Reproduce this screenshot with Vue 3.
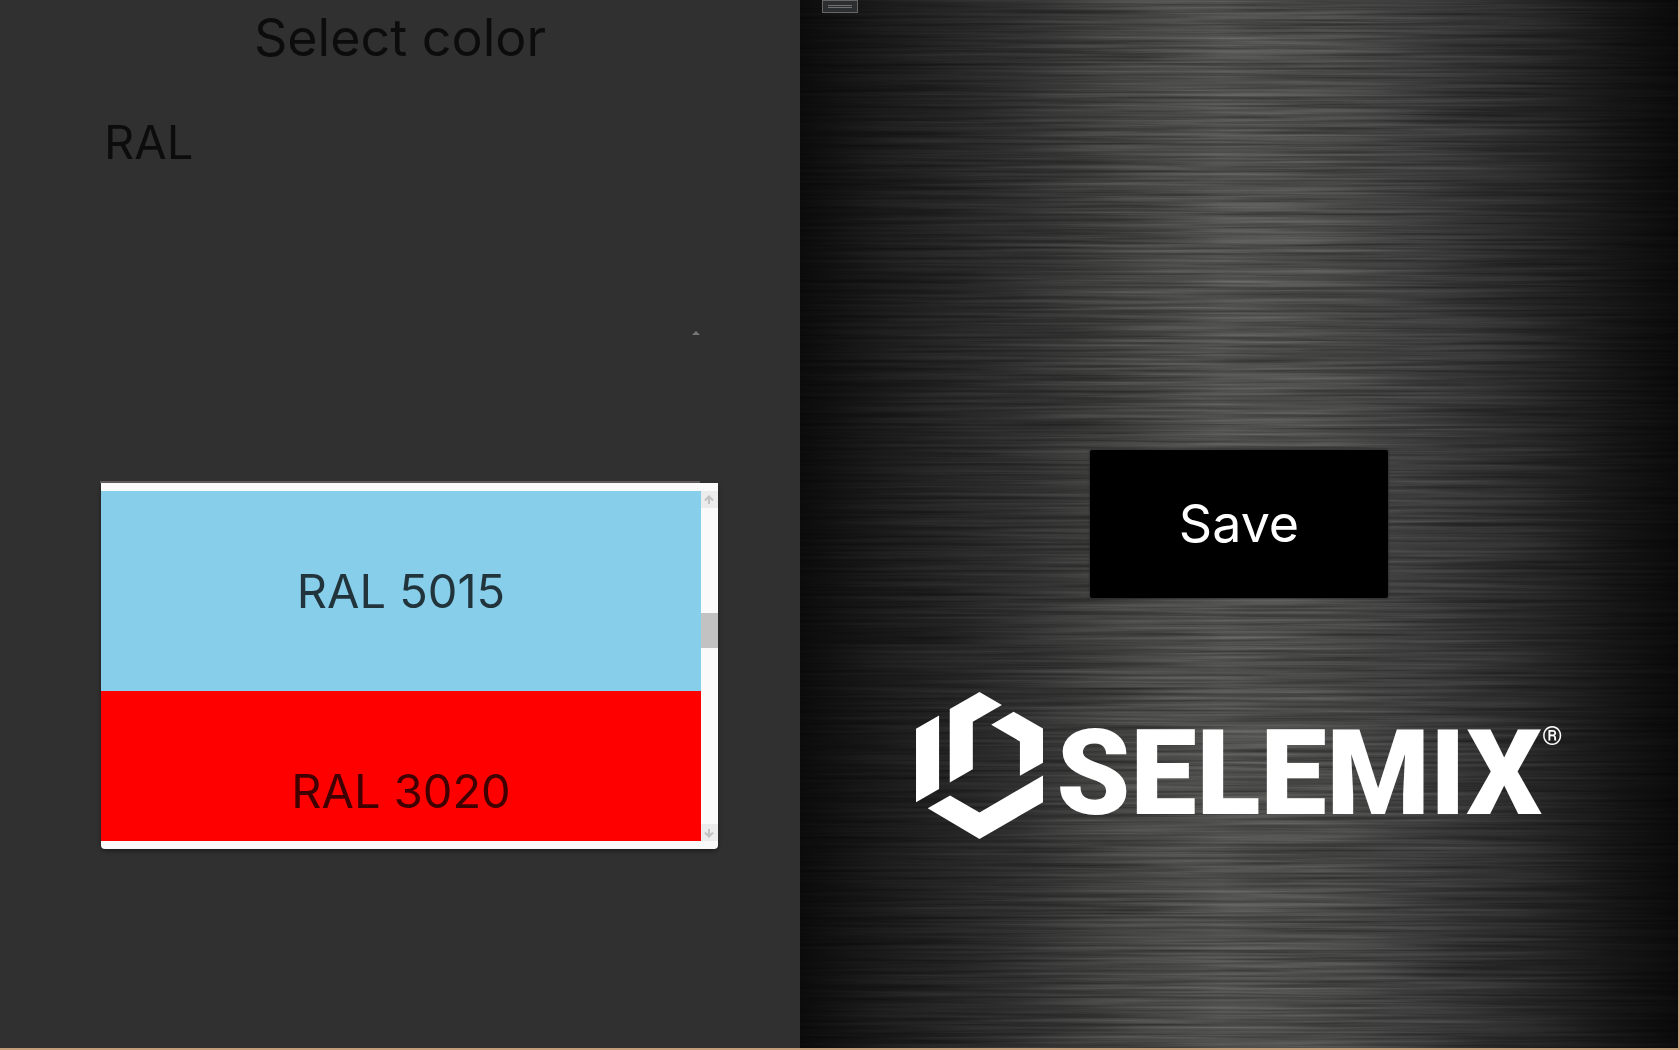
<script setup>
import { ref } from 'vue'

const colors = [
  { code: 'RAL 5015', fill: '#87ceeb' },
  { code: 'RAL 3020', fill: '#ff0000' }
]
const selected = ref('')
</script>

<template>
  <main class="page">
    <section class="picker">
      <h1 class="title">Select color</h1>
      <div class="field">
        <label class="label" for="ral">RAL</label>
        <div class="trigger">
          <select id="ral" v-model="selected" class="select">
            <option value=""></option>
            <option v-for="c in colors" :key="c.code" :value="c.code">{{ c.code }}</option>
          </select>
          <svg class="caret" viewBox="0 0 8 4" aria-hidden="true"><path d="M0 4 4 0 8 4Z" /></svg>
        </div>
        <div class="panel">
          <div class="options" role="listbox" aria-label="RAL">
            <button
              v-for="c in colors"
              :key="c.code"
              class="option"
              type="button"
              role="option"
              :aria-selected="selected === c.code"
              :style="{ backgroundColor: c.fill }"
              @click="selected = c.code"
            >{{ c.code }}</button>
          </div>
          <div class="scrollbar" aria-hidden="true">
            <svg class="arrow" viewBox="0 0 17 17"><path d="M8 13V6M4 9.500 8 5.500 12 9.500" /></svg>
            <div class="track"><div class="thumb"></div></div>
            <svg class="arrow" viewBox="0 0 17 17"><path d="M8 5v7M4 8.500 8 12.500 12 8.500" /></svg>
          </div>
        </div>
      </div>
    </section>

    <section class="preview">
      <svg class="metal" aria-hidden="true">
        <filter id="brushed" x="0" y="0" width="100%" height="100%" color-interpolation-filters="sRGB">
          <feTurbulence type="fractalNoise" baseFrequency="0.005 0.3" numOctaves="3" seed="8" />
          <feColorMatrix values="0.45 0 0 0 0.27  0.45 0 0 0 0.27  0.45 0 0 0 0.27  0 0 0 0 1" />
        </filter>
        <rect width="100%" height="100%" filter="url(#brushed)" />
      </svg>
      <button class="handle" type="button" aria-label="Toolbar"><span class="grip"></span></button>
      <div class="content">
        <button class="save" type="button">Save</button>
        <div class="logo">
          <svg class="mark" viewBox="50 65 380 440" aria-hidden="true">
            <path d="M50 175 119 135V355L50 395Z" />
            <path d="M151 116 240 65 307 104 220 154V296L151 336Z" />
            <path d="M275 163 342 124 430 174V277L361 316V213Z" />
            <path d="M85 413 152 375 240 426 430 315V395L240 505Z" />
          </svg>
          <span class="brand">SELEMIX</span>
          <span class="reg">®</span>
        </div>
      </div>
    </section>
  </main>
</template>

<style>
body {
  margin: 0;
}
</style>

<style scoped>
.page {
  display: flex;
  box-sizing: border-box;
  min-height: 100vh;
  border-right: 2px solid #c49d7b;
  border-bottom: 2px solid #c49d7b;
  background: #303030;
  color: rgba(0, 0, 0, 0.75);
  font-family: Inter, "Liberation Sans", sans-serif;
  font-size: 47px;
  line-height: 76px;
}

button {
  border: 0;
  font: inherit;
  cursor: pointer;
}

.picker {
  flex: 800 1 0;
  min-width: 0;
}

.title {
  margin: 0;
  font-size: 52px;
  font-weight: 400;
  line-height: 76px;
  text-align: center;
}

.field {
  width: 75%;
  margin: 28px auto 0;
}

.label {
  display: block;
  padding-left: 4px;
}

.trigger {
  display: flex;
  align-items: center;
  height: 297px;
  padding-top: 4px;
  border-bottom: 2px solid #625e62;
}

.select {
  flex: 1;
  min-width: 0;
  height: 76px;
  border: 0;
  outline: 0;
  appearance: none;
  background: transparent;
  color: inherit;
  font: inherit;
}

.caret {
  width: 8px;
  height: 4px;
  fill: #777;
}

.panel {
  display: flex;
  width: calc(100% + 17px);
  margin-left: 1px;
  padding: 8px 0;
  border-radius: 0 0 4px 4px;
  background: #fafafa;
  box-shadow: 0 2px 4px rgba(0, 0, 0, 0.4);
}

.options {
  flex: 1;
  height: 350px;
  overflow: hidden;
}

.option {
  display: block;
  width: 100%;
  height: 200px;
  padding: 0;
  color: inherit;
}

.scrollbar {
  display: flex;
  flex-direction: column;
  width: 17px;
}

.arrow {
  width: 17px;
  height: 17px;
  background: #ececec;
  fill: none;
  stroke: #c2c2c2;
  stroke-width: 2;
}

.track {
  flex: 1;
  padding-top: 105px;
}

.thumb {
  height: 35px;
  background: #c2c2c2;
}

.preview {
  position: relative;
  display: flex;
  flex: 878 1 0;
  flex-direction: column;
  min-width: 0;
  background: linear-gradient(90deg, #0b0b0b 0%, #1b1b1b 10%, #2f2f2f 25%, #434342 37%, #525250 48%, #4a4a49 59%, #3c3c3c 71%, #282828 83%, #151515 93%, #0a0a0a 100%);
}

.metal {
  position: absolute;
  inset: 0;
  width: 100%;
  height: 100%;
  mix-blend-mode: overlay;
  pointer-events: none;
}

.handle {
  z-index: 1;
  display: flex;
  align-items: center;
  justify-content: center;
  width: 36px;
  height: 13px;
  margin-left: 22px;
  padding: 0;
  border: 1px solid #666;
  background: #2c2e2f;
}

.grip {
  width: 24px;
  height: 1px;
  border-top: 1px solid #707070;
  border-bottom: 1px solid #707070;
}

.content {
  z-index: 1;
  display: flex;
  flex-direction: column;
  align-items: center;
  gap: 94px;
  padding-top: 437px;
}

.save {
  width: 298px;
  height: 148px;
  border-radius: 2px;
  background: #000;
  color: #fff;
  font-size: 52px;
  box-shadow: 0 0 2px 1px rgba(40, 40, 40, 0.6);
}

.logo {
  display: flex;
  align-items: flex-start;
  color: #fff;
  font-family: Roboto, "Liberation Sans", sans-serif;
}

.mark {
  width: 127px;
  height: 147px;
  margin-right: 14px;
  fill: #fff;
}

.brand {
  font-size: 118px;
  font-weight: 900;
  line-height: 164px;
}

.reg {
  padding-top: 28px;
  font-size: 26px;
  line-height: 32px;
}
</style>
